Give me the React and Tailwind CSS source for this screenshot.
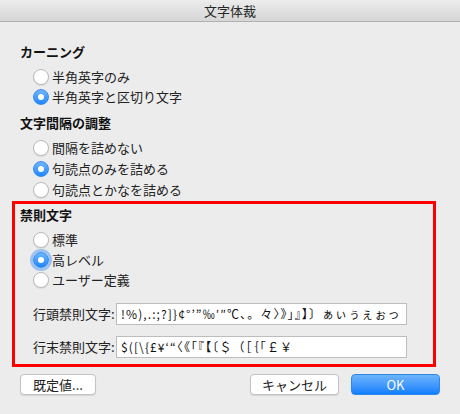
import React from 'react';

const font = { fontFamily: '"Noto Sans CJK JP", "Noto Sans", sans-serif' };

function Radio({ checked, focused, label, h = 'h-[21px]' }) {
  return (
    <div className={`flex items-center ${h}`}>
      {checked ? (
        <span
          className={`w-[16px] h-[16px] rounded-full bg-gradient-to-b from-[#6db5fb] to-[#1a86fd] border border-[#3a8ef0] flex items-center justify-center ${
            focused ? 'shadow-[0_0_0_3px_rgba(90,160,240,0.55)]' : ''
          }`}
        >
          <span className="w-[6px] h-[6px] rounded-full bg-white" />
        </span>
      ) : (
        <span className="w-[16px] h-[16px] rounded-full bg-white border border-[#b9b9b9] shadow-[0_1px_1px_rgba(0,0,0,0.08)]" />
      )}
      <span className="ml-[3px] text-[13px] text-[#222]">{label}</span>
    </div>
  );
}

function Field({ label, value, className }) {
  return (
    <div className={`flex items-center ${className}`}>
      <span className="w-[96px] pl-[13px] text-[13px] text-[#222]">{label}</span>
      <div className="w-[291px] h-[22px] bg-white border border-[#bdbdbd] px-[4px] flex items-center overflow-hidden whitespace-nowrap text-[12px] tracking-[1.1px] text-[#111]">
        {value}
      </div>
    </div>
  );
}

export default function App() {
  return (
    <div className="w-[460px] h-[414px] bg-[#ececec] overflow-hidden" style={font}>
      {/* Title bar */}
      <div className="h-[22px] bg-gradient-to-b from-[#ececec] to-[#d6d6d6] border-b border-[#b1b1b1] flex items-center justify-center text-[13px] text-[#262626]">
        文字体裁
      </div>

      <div className="px-[12px]">
        <div className="px-[8px]">
          <div className="mt-[20px] h-[20px] leading-[20px] text-[13px] font-bold text-[#111]">カーニング</div>
          <div className="mt-[5px] pl-[13px]">
            <Radio label="半角英字のみ" h="h-[20px]" />
            <Radio checked label="半角英字と区切り文字" h="h-[20px]" />
          </div>

          <div className="mt-[6px] h-[20px] leading-[20px] text-[13px] font-bold text-[#111]">文字間隔の調整</div>
          <div className="mt-[4px] pl-[13px]">
            <Radio label="間隔を詰めない" />
            <Radio checked label="句読点のみを詰める" />
            <Radio label="句読点とかなを詰める" />
          </div>
        </div>

        {/* Highlighted section */}
        <div className="mt-[1px] w-[424px] border-[3px] border-[#ff0000] pl-[5px] pt-[1px] pb-[6px]">
          <div className="h-[20px] leading-[20px] text-[13px] font-bold text-[#111]">禁則文字</div>
          <div className="mt-[4px] pl-[13px]">
            <Radio label="標準" />
            <Radio checked focused label="高レベル" h="h-[20px]" />
            <Radio label="ユーザー定義" h="h-[20px]" />
          </div>
          <Field
            className="mt-[13px]"
            label="行頭禁則文字:"
            value="!%),.:;?]}¢°’”‰′″℃、。々〉》」』】〕ぁぃぅぇぉっ"
          />
          <Field
            className="mt-[11px]"
            label="行末禁則文字:"
            value="$([\{£¥‘“〈《「『【〔＄（［｛｢￡￥"
          />
        </div>

        {/* Buttons */}
        <div className="mt-[7px] flex items-center">
          <button className="ml-[8px] w-[76px] h-[21px] bg-white border border-[#c3c3c3] rounded-[4px] shadow-[0_1px_1px_rgba(0,0,0,0.1)] text-[13px] text-[#222]">
            既定値...
          </button>
          <button className="ml-[154px] w-[89px] h-[21px] bg-white border border-[#c3c3c3] rounded-[4px] shadow-[0_1px_1px_rgba(0,0,0,0.1)] text-[13px] text-[#222]">
            キャンセル
          </button>
          <button className="ml-[12px] w-[89px] h-[21px] bg-gradient-to-b from-[#6cb4fb] to-[#0b7ffe] border border-[#2c86f0] rounded-[4px] text-[13px] text-white">
            OK
          </button>
        </div>
      </div>
    </div>
  );
}
